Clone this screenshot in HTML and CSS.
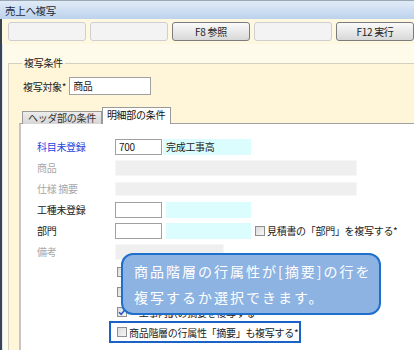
FILE: index.html
```html
<!DOCTYPE html>
<html lang="ja">
<head>
    <meta charset="UTF-8">
    <title>売上へ複写</title>
    <link rel="stylesheet" href="styles.css">
</head>
<body>
<div class="window">
    <div class="titlebar">売上へ複写</div>

    <!-- Function key bar -->
    <div class="toolbar">
        <div class="fkey empty"></div>
        <div class="fkey empty"></div>
        <div class="fkey">F8 参照</div>
        <div class="fkey empty"></div>
        <div class="fkey">F12 実行</div>
    </div>

    <div class="content">
        <fieldset class="group">
            <legend>複写条件</legend>
            <div class="target-row">
                <span class="label">複写対象*</span>
                <div class="input target">商品</div>
            </div>

            <div class="tabs">
                <div class="tab">ヘッダ部の条件</div>
                <div class="tab active">明細部の条件</div>
            </div>

            <div class="panel">
                <div class="form-grid">
                    <span class="label link">科目未登録</span>
                    <div class="field-row">
                        <div class="input code">700</div>
                        <div class="name tight">完成工事高</div>
                    </div>

                    <span class="label muted">商品</span>
                    <div class="bar wide"></div>

                    <span class="label muted">仕様 摘要</span>
                    <div class="bar wide thin"></div>

                    <span class="label">工種未登録</span>
                    <div class="field-row">
                        <div class="input code"></div>
                        <div class="name"></div>
                    </div>

                    <span class="label">部門</span>
                    <div class="field-row">
                        <div class="input code"></div>
                        <div class="name"></div>
                        <span class="check"><span class="box"></span>見積書の「部門」を複写する*</span>
                    </div>

                    <span class="label muted">備考</span>
                    <div class="bar short"></div>
                </div>

                <!-- rows partly hidden behind the balloon -->
                <div class="options">
                    <span class="check"><span class="box"></span></span>
                    <span class="check"><span class="box"></span></span>
                    <span class="check"><span class="box checked"><svg viewBox="0 0 10 10" width="10" height="10"><path d="M2 5.2 L4.2 7.4 L8 2.8" fill="none" stroke="#2a55c8" stroke-width="1.6"/></svg></span>・工事内訳の摘要を複写する</span>
                    <div class="highlight">
                        <span class="check"><span class="box"></span>商品階層の行属性「摘要」も複写する*</span>
                    </div>
                </div>
            </div>
        </fieldset>
    </div>

    <div class="callout">
        商品階層の行属性が[摘要]の行を<br>
        複写するか選択できます。
    </div>
</div>
</body>
</html>
```

FILE: styles.css
```css
body {
    margin: 0;
    font-family: "Noto Sans CJK JP", sans-serif;
    font-size: 10px;
    letter-spacing: -0.3px;
    color: #222;
    overflow: hidden;
}

.window {
    position: relative;
    width: 414px;
    height: 350px;
    overflow: hidden;
    background-color: #fefbea;
}

/* Title bar */
.titlebar {
    height: 19px;
    line-height: 19px;
    padding-left: 5px;
    font-size: 10.5px;
    color: #1e2a38;
    background: linear-gradient(#e1ebf7, #bcd2ec);
    border-top: 1px solid #9aa8b6;
    box-sizing: border-box;
}

/* Function keys */
.toolbar {
    display: flex;
    gap: 4px;
    height: 25px;
    padding: 3px 0 0 6px;
    box-sizing: border-box;
    background-color: #fef8e0;
    border-left: 2px solid #3a4450;
}

.fkey {
    width: 78px;
    height: 19px;
    box-sizing: border-box;
    border: 1px solid #7c7c7c;
    border-radius: 3px;
    background: linear-gradient(#fafafa, #d8d8d8);
    line-height: 17px;
    text-align: center;
    font-size: 10px;
    color: #222;
}

.fkey.empty {
    border-color: #cfcfcf;
    background: #f3f3f3;
}

/* Body */
.content {
    height: 306px;
    padding-top: 13px;
    box-sizing: border-box;
    border-left: 2px solid #3a4450;
    padding-left: 6px;
    box-shadow: inset 1px 0 0 #dbe6f2;
}

.group {
    margin: 0 -30px 0 0;
    padding: 8px 0 0 10px;
    border: 1px solid #d4d0c0;
    border-right: none;
    background-color: #fff6da;
    height: 400px;
}

.group legend {
    padding: 0 2px;
    margin-left: 3px;
    line-height: 12px;
    font-size: 10px;
}

.target-row {
    display: flex;
    align-items: center;
    gap: 3px;
    padding-left: 4px;
}

.input {
    box-sizing: border-box;
    border: 1px solid #a0a0a0;
    background: #fff;
    padding-left: 3px;
}

.input.target {
    width: 82px;
    height: 18px;
    line-height: 16px;
}

/* Tabs */
.tabs {
    display: flex;
    align-items: flex-end;
    height: 16px;
    margin-top: 13px;
    padding-left: 3px;
}

.tab {
    height: 12px;
    line-height: 11px;
    padding: 0 5px;
    border: 1px solid #9a9a9a;
    border-bottom: none;
    background: linear-gradient(#ececec, #d6d6d6);
    color: #333;
}

.tab.active {
    position: relative;
    z-index: 1;
    height: 16px;
    line-height: 14px;
    background: #fff;
    color: #111;
    padding: 0 5px 0 4px;
}

.panel {
    margin-top: -1px;
    border-top: 1px solid #a0a0a0;
    border-left: 2px solid #c6c6c6;
    background: #fff;
    padding: 12px 0 0 16px;
    height: 260px;
}

.form-grid {
    display: grid;
    grid-template-columns: 78px 1fr;
    grid-auto-rows: 21px;
    align-items: center;
}

.label.link { color: #2346dc; }
.label.muted { color: #a8a8a8; }

.field-row {
    display: flex;
    align-items: center;
    gap: 4px;
}

.input.code {
    width: 47px;
    height: 16px;
    line-height: 14px;
}

.field-row:first-child .input.code { height: 17px; }

.name {
    width: 85px;
    height: 16px;
    line-height: 16px;
    background: #dcfdfd;
    padding-left: 3px;
    box-sizing: border-box;
}

.name.tight {
    margin-left: -3px;
    width: 88px;
}

.bar {
    height: 16px;
    background: #efefef;
    border: 1px solid #f6f6f6;
    box-sizing: border-box;
}

.bar.wide { width: 242px; }
.bar.thin { height: 14px; }
.bar.short { width: 109px; }

/* Checkboxes */
.check {
    display: flex;
    align-items: center;
    gap: 2px;
    white-space: nowrap;
}

.box {
    width: 10px;
    height: 10px;
    box-sizing: border-box;
    border: 1px solid #8e8f8f;
    background: linear-gradient(135deg, #dcdcdc, #f6f6f6);
    display: flex;
}

.box svg { margin: -1px; }

.options {
    display: flex;
    flex-direction: column;
    padding-left: 80px;
}

.options > .check { height: 20px; }

.highlight {
    margin: -1px 0 0 -8px;
    width: 192px;
    height: 22px;
    box-sizing: border-box;
    border: 2px solid #1a63c6;
    padding-left: 6px;
    display: flex;
    align-items: center;
    background: #fff;
}

/* Balloon over the form */
.callout {
    position: absolute;
    left: 121px;
    top: 253px;
    width: 260px;
    height: 62px;
    box-sizing: border-box;
    border: 2px solid #1f6fcd;
    border-radius: 12px;
    background: #8db3e2;
    color: #fff;
    font-size: 14px;
    letter-spacing: 2px;
    line-height: 26px;
    padding: 3px 0 0 11px;
}
```
